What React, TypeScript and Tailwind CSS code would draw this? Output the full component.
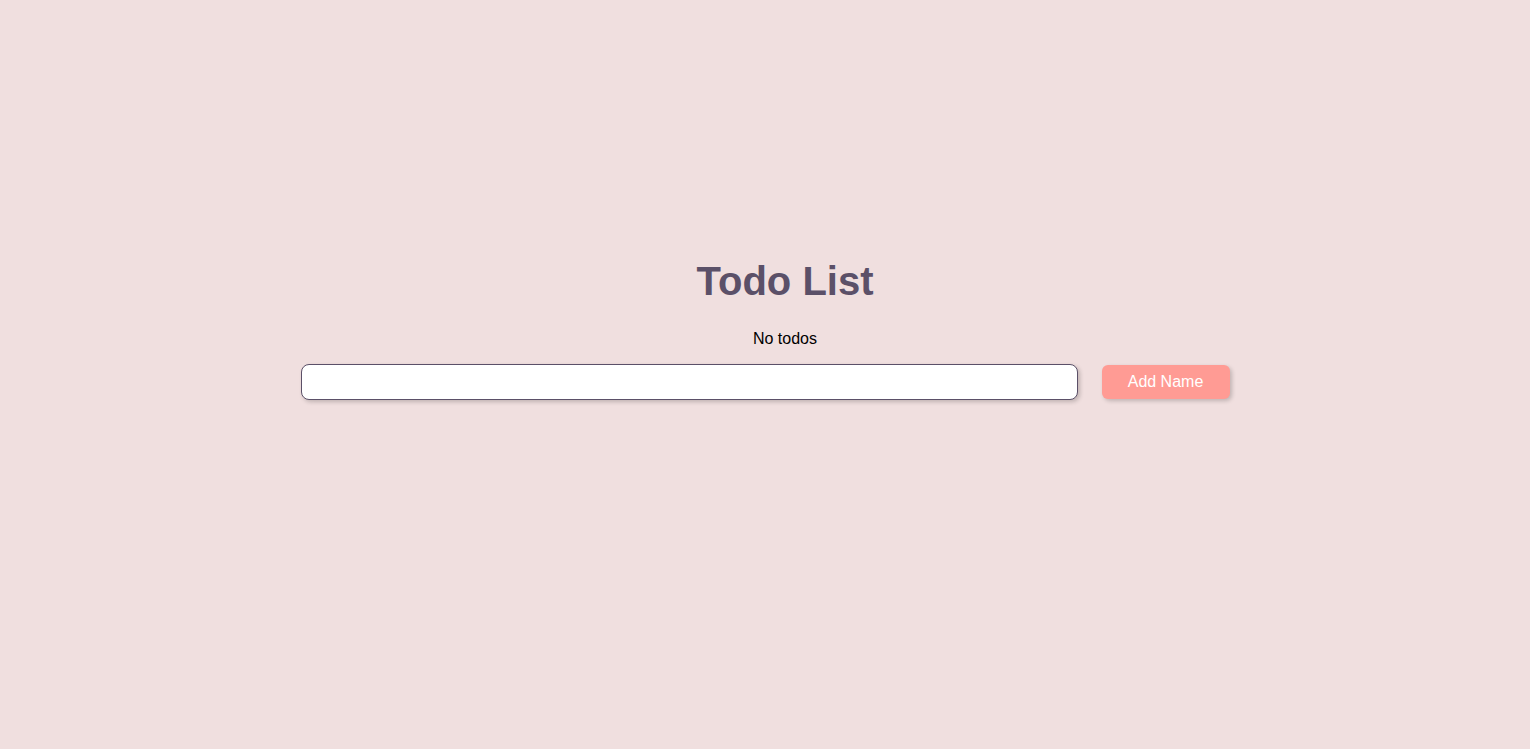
import React, { useState } from 'react';

export default function App() {
  const [name, setName] = useState('');
  const [todos, setTodos] = useState<string[]>([]);

  const addTodo = () => {
    if (!name.trim()) return;
    setTodos([...todos, name.trim()]);
    setName('');
  };

  return (
    <div className="min-h-screen w-full bg-[#f0dfdf] font-['Liberation_Sans',Arial,sans-serif] text-black">
      <div className="flex flex-col items-center pt-[258px]">
        {/* Header */}
        <h1 className="ml-[40px] text-[40px] leading-[46px] font-bold text-[#5b5068]">Todo List</h1>

        {/* List */}
        <div className="ml-[40px] mt-[26px] text-base leading-[18px]">
          {todos.length === 0 ? (
            <p>No todos</p>
          ) : (
            <ul>
              {todos.map((t, i) => (
                <li key={i}>{t}</li>
              ))}
            </ul>
          )}
        </div>

        {/* Form */}
        <div className="mt-[16px] flex items-center gap-[24px]">
          <input
            value={name}
            onChange={e => setName(e.target.value)}
            className="h-[36px] w-[777px] rounded-[8px] border border-[#5b5068] bg-white px-2 shadow-[2px_2px_4px_rgba(0,0,0,0.2)] outline-none"
          />
          <button
            onClick={addTodo}
            className="h-[34px] w-[128px] rounded-[6px] bg-[#ff9b94] text-base text-white shadow-[2px_2px_4px_rgba(0,0,0,0.2)]"
          >
            Add Name
          </button>
        </div>
      </div>
    </div>
  );
}
